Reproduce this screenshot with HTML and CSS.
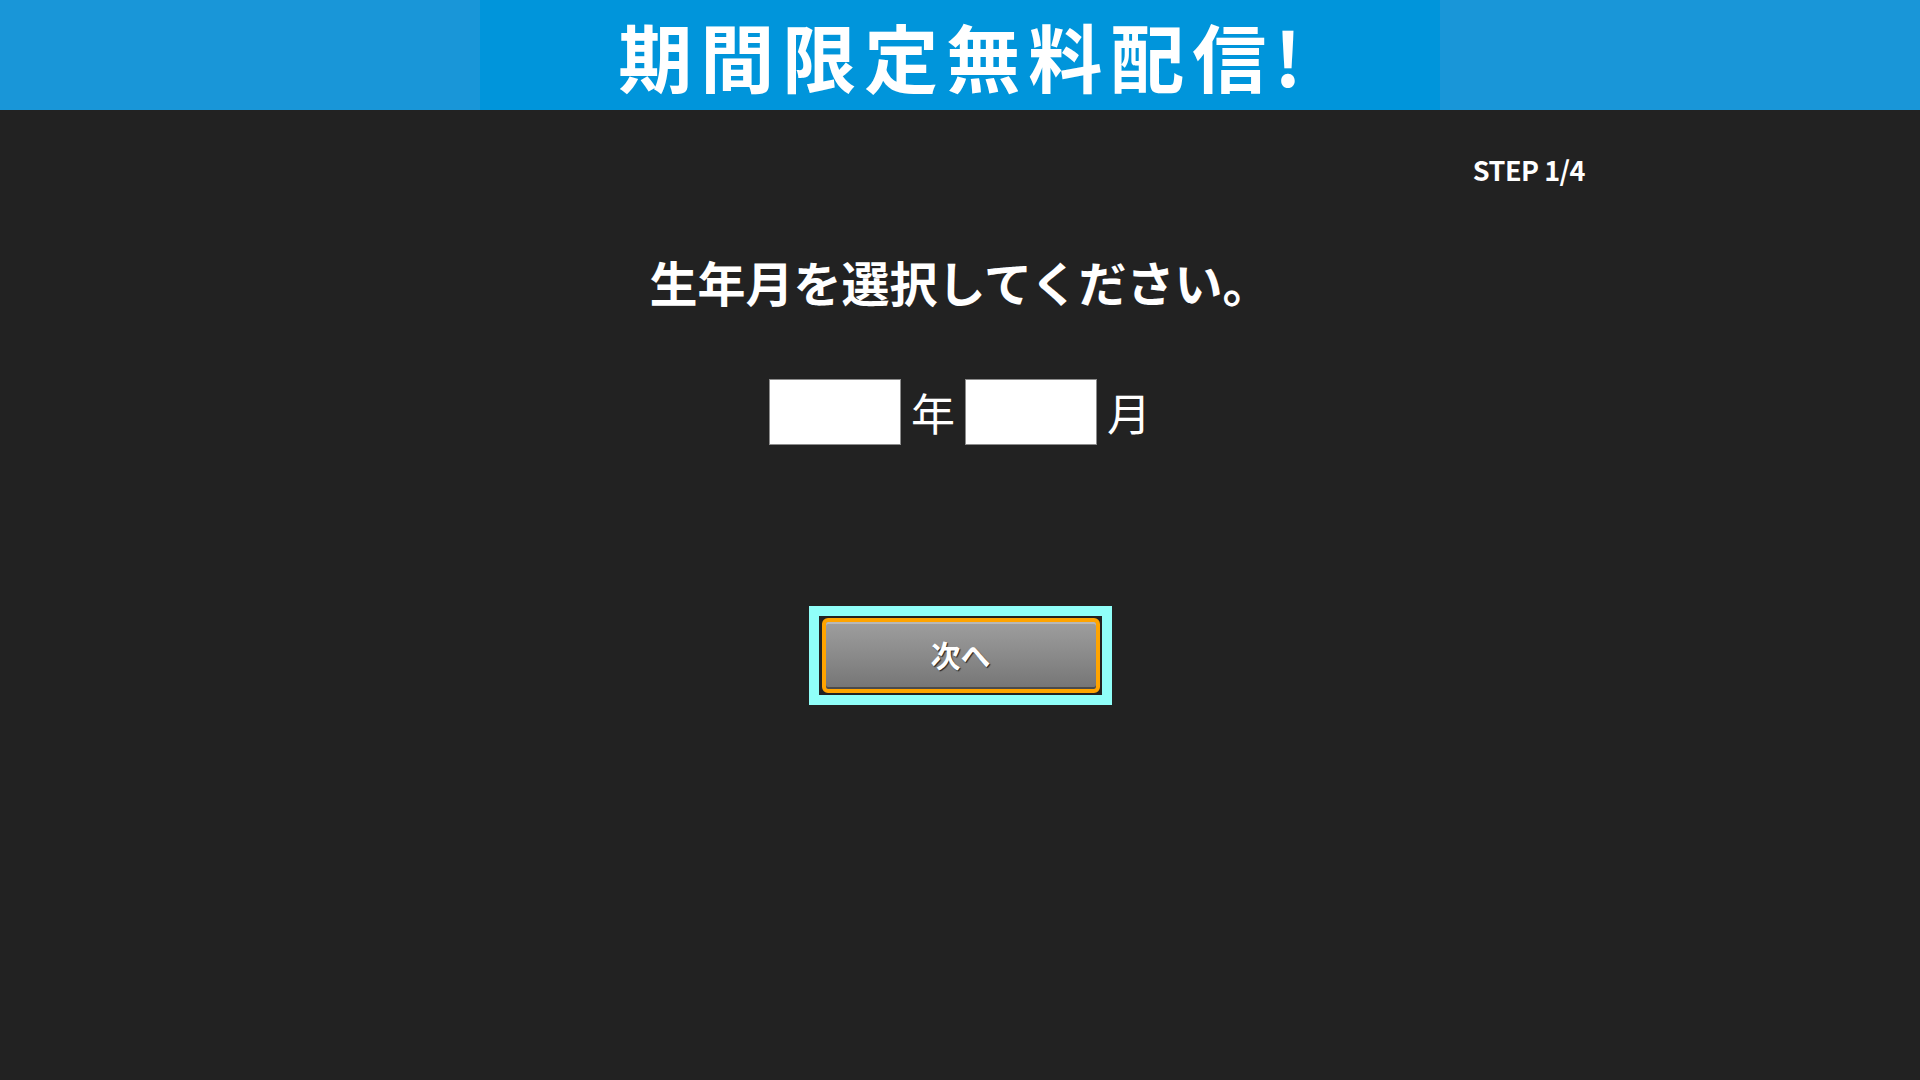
FILE: index.html
```html
<!DOCTYPE html>
<html lang="ja">
<head>
<meta charset="utf-8">
<title>生年月を選択してください</title>
<link rel="stylesheet" href="styles.css">
</head>
<body>
<header class="banner">
  <div class="banner-inner">
    <h1 class="banner-title">期間限定無料配信!</h1>
  </div>
</header>
<main class="content">
  <div class="step">STEP 1/4</div>
  <h2 class="title">生年月を選択してください。</h2>
  <div class="date-row">
    <input class="date-input" type="text" aria-label="年">
    <span class="date-label">年</span>
    <input class="date-input" type="text" aria-label="月">
    <span class="date-label">月</span>
  </div>
  <div class="actions">
    <div class="focus-ring">
      <button class="next-button" type="button">次へ</button>
    </div>
  </div>
</main>
</body>
</html>
```

FILE: styles.css
```css
* {
  box-sizing: border-box;
}

html, body {
  margin: 0;
  padding: 0;
}

body {
  background: #222222;
  color: #ffffff;
  font-family: "Noto Sans CJK JP", "Noto Sans", sans-serif;
  min-height: 1080px;
}

.banner {
  height: 110px;
  background: #1996d8;
  display: flex;
  justify-content: center;
}

.banner-inner {
  width: 960px;
  height: 110px;
  background: #0095db;
  display: flex;
  justify-content: center;
  align-items: center;
}

.banner-title {
  margin: 0;
  padding-left: 8px;
  font-size: 74px;
  font-weight: 700;
  line-height: 110px;
  letter-spacing: 8px;
  color: #ffffff;
  white-space: nowrap;
}

.content {
  width: 1280px;
  margin: 0 auto;
  padding: 46px 15px 0;
}

.step {
  text-align: right;
  font-size: 27px;
  font-weight: 700;
  line-height: 27px;
  height: 27px;
  letter-spacing: -0.5px;
}

.title {
  margin: 74px 0 0;
  text-align: center;
  font-size: 48px;
  font-weight: 700;
  line-height: 48px;
  letter-spacing: 0;
}

.date-row {
  margin-top: 74px;
  display: flex;
  justify-content: center;
  align-items: center;
  gap: 10px;
}

.date-input {
  width: 132px;
  height: 66px;
  margin: 0;
  border: 1px solid #8c8c8c;
  background: #ffffff;
  padding: 0 6px;
  font-family: "Noto Sans CJK JP", sans-serif;
  font-size: 30px;
  outline: none;
}

.date-label {
  font-size: 44px;
  font-weight: 400;
  line-height: 44px;
  padding-bottom: 1px;
}

.actions {
  margin-top: 161px;
  display: flex;
  justify-content: center;
}

.focus-ring {
  border: 10px solid #90fff9;
  padding: 2px 2px 2px 3px;
  background: #222222;
}

.next-button {
  display: block;
  width: 278px;
  height: 75px;
  border: 4px solid #ffa400;
  border-radius: 6px;
  background: linear-gradient(to bottom, #9e9e9e 0%, #8a8a8a 50%, #757575 100%);
  box-shadow: inset 0 2px 0 #b8b8b8, inset 0 -2px 0 #4a4a4a;
  color: #ffffff;
  font-family: "Noto Sans CJK JP", sans-serif;
  font-size: 30px;
  font-weight: 700;
  line-height: 30px;
  text-shadow: 1px 1px 1px #222222;
  padding: 0 0 4px;
  cursor: pointer;
}
```
